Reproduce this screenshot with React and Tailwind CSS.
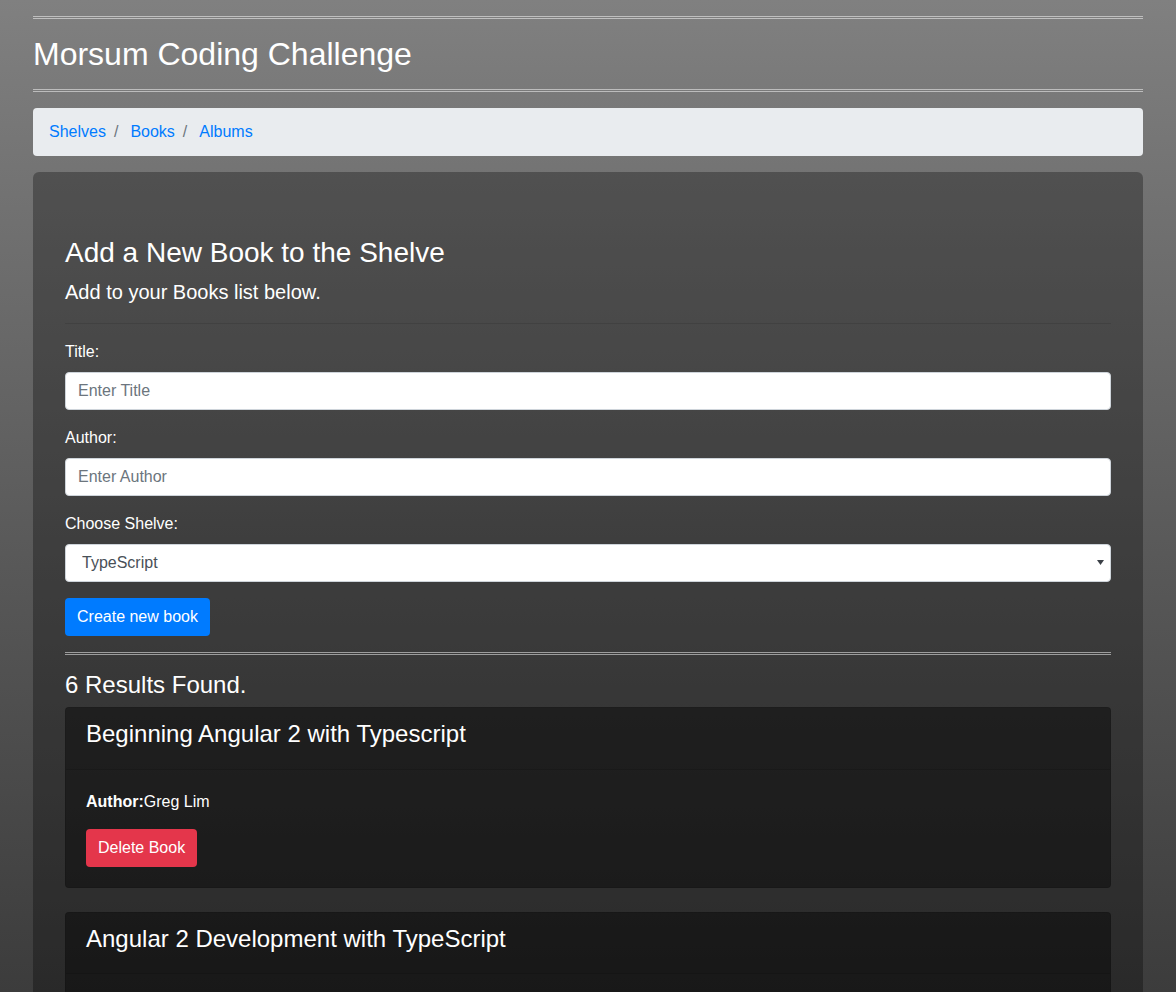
import { useState } from "react";

const initialBooks = [
  { id: 1, title: "Beginning Angular 2 with Typescript", author: "Greg Lim" },
  { id: 2, title: "Angular 2 Development with TypeScript", author: "Yakov Fain" },
  { id: 3, title: "Learning TypeScript", author: "Remo H. Jansen" },
  { id: 4, title: "Mastering TypeScript", author: "Nathan Rozentals" },
  { id: 5, title: "TypeScript Essentials", author: "Christopher Nance" },
  { id: 6, title: "Pro TypeScript", author: "Steve Fenton" },
];

function DoubleRule() {
  return <div className="h-[3px] border-y border-white/50" />;
}

export default function App() {
  const [books, setBooks] = useState(initialBooks);
  const [title, setTitle] = useState("");
  const [author, setAuthor] = useState("");
  const [shelve, setShelve] = useState("TypeScript");

  const handleSubmit = (e) => {
    e.preventDefault();
    if (!title) return;
    setBooks((prev) => [...prev, { id: Date.now(), title, author }]);
    setTitle("");
    setAuthor("");
  };

  const inputClass =
    "block w-full h-[38px] px-3 py-1.5 bg-white border border-[#ced4da] rounded text-base text-[#495057] placeholder:text-[#6c757d] focus:outline-none";

  return (
    <div className="min-h-screen bg-fixed bg-gradient-to-b from-[#808080] to-[#3c3c3c] font-['Liberation_Sans',Arial,sans-serif] text-white text-base leading-6">
      <div className="w-[1110px] mx-auto pt-4">
        <DoubleRule />
        <h1 className="my-4 text-[32px] leading-[1.2] font-normal">
          Morsum Coding Challenge
        </h1>
        <DoubleRule />

        <nav className="mt-4 mb-4 px-4 py-3 bg-[#e9ecef] rounded">
          <ol className="flex">
            <li>
              <a href="#" className="text-[#007bff]">Shelves</a>
            </li>
            <li className="flex">
              <span className="pl-2 pr-3 text-[#6c757d]">/</span>
              <a href="#" className="text-[#007bff]">Books</a>
            </li>
            <li className="flex">
              <span className="pl-2 pr-3 text-[#6c757d]">/</span>
              <a href="#" className="text-[#007bff]">Albums</a>
            </li>
          </ol>
        </nav>

        <div className="bg-black/30 rounded-md px-8 pt-16 pb-16">
          <h3 className="text-[28px] leading-[1.2] mb-[7px]">
            Add a New Book to the Shelve
          </h3>
          <p className="text-xl leading-normal">Add to your Books list below.</p>
          <div className="my-4 border-t border-black/10" />

          <form onSubmit={handleSubmit}>
            <div className="mb-4">
              <label className="block mb-2">Title:</label>
              <input
                type="text"
                placeholder="Enter Title"
                value={title}
                onChange={(e) => setTitle(e.target.value)}
                className={inputClass}
              />
            </div>
            <div className="mb-4">
              <label className="block mb-2">Author:</label>
              <input
                type="text"
                placeholder="Enter Author"
                value={author}
                onChange={(e) => setAuthor(e.target.value)}
                className={inputClass}
              />
            </div>
            <div className="mb-4">
              <label className="block mb-2">Choose Shelve:</label>
              <div className="relative">
                <select
                  value={shelve}
                  onChange={(e) => setShelve(e.target.value)}
                  className={inputClass + " appearance-none pl-4"}
                >
                  <option>TypeScript</option>
                  <option>JavaScript</option>
                  <option>Angular</option>
                </select>
                <svg
                  className="absolute right-[7px] top-[16px] pointer-events-none"
                  width="7"
                  height="5"
                  viewBox="0 0 7 5"
                >
                  <path d="M0 0h7L3.5 5z" fill="#3b4046" />
                </svg>
              </div>
            </div>
            <button
              type="submit"
              className="h-[38px] px-3 bg-[#007bff] text-white rounded"
            >
              Create new book
            </button>
          </form>

          <div className="mt-4">
            <DoubleRule />
          </div>
          <h4 className="mt-4 mb-[7px] text-2xl leading-[1.2]">
            {books.length} Results Found.
          </h4>

          {books.map((book) => (
            <div
              key={book.id}
              className="mb-6 bg-black/40 border border-black/[0.125] rounded"
            >
              <div className="px-5 pt-3 pb-3 bg-black/[0.03] border-b border-black/[0.125]">
                <h4 className="mb-2 text-2xl leading-[1.2]">{book.title}</h4>
              </div>
              <div className="p-5">
                <p className="mb-[15px]">
                  <b>Author:</b>
                  {book.author}
                </p>
                <button
                  type="button"
                  onClick={() =>
                    setBooks((prev) => prev.filter((b) => b.id !== book.id))
                  }
                  className="h-[38px] px-3 bg-[#e4364b] text-white rounded"
                >
                  Delete Book
                </button>
              </div>
            </div>
          ))}
        </div>
      </div>
    </div>
  );
}
